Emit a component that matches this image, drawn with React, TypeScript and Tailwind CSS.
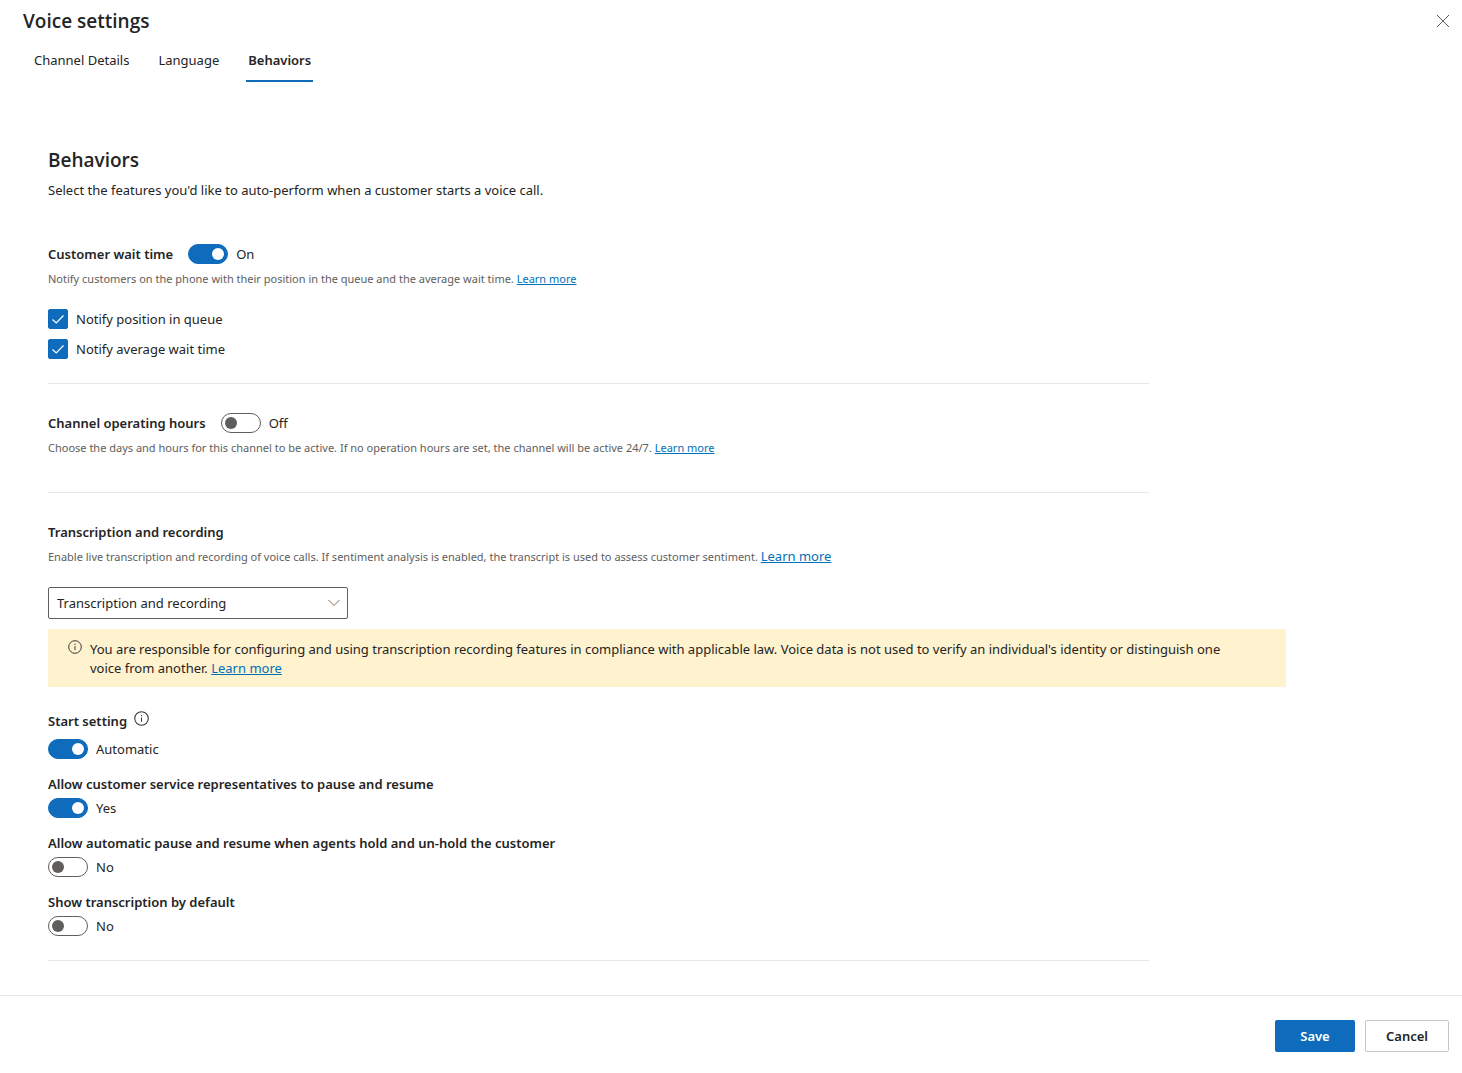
import React, { useState } from 'react';

const TABS = ['Channel Details', 'Language', 'Behaviors'];

interface ToggleProps {
  id: string;
  checked: boolean;
  onChange: (checked: boolean) => void;
  labelledBy: string;
  text: string;
}

const Toggle: React.FC<ToggleProps> = ({ id, checked, onChange, labelledBy, text }) => (
  <div className="flex items-center gap-2">
    <input
      id={id}
      type="checkbox"
      role="switch"
      aria-labelledby={labelledBy}
      checked={checked}
      onChange={(e) => onChange(e.target.checked)}
      className="flex h-5 w-10 shrink-0 cursor-pointer appearance-none items-center rounded-full border border-[#605e5c] bg-white px-[3px] before:size-3 before:rounded-full before:bg-[#605e5c] checked:justify-end checked:border-[#0f6cbd] checked:bg-[#0f6cbd] checked:before:bg-white"
    />
    <span>{text}</span>
  </div>
);

interface CheckboxProps {
  label: string;
  checked: boolean;
  onChange: (checked: boolean) => void;
}

const Checkbox: React.FC<CheckboxProps> = ({ label, checked, onChange }) => (
  <label className="flex w-fit cursor-pointer items-center gap-2">
    <span className="relative size-5">
      <input
        type="checkbox"
        checked={checked}
        onChange={(e) => onChange(e.target.checked)}
        className="block size-5 cursor-pointer appearance-none rounded-xs border border-[#605e5c] checked:border-[#0f6cbd] checked:bg-[#0f6cbd]"
      />
      <svg viewBox="0 0 20 20" fill="none" stroke="white" className="pointer-events-none absolute inset-0 size-5">
        <path d="M4.5 10.5l3.7 3.5 7.3-7.5" strokeWidth="1.2" />
      </svg>
    </span>
    {label}
  </label>
);

const LearnMore: React.FC<{ className?: string }> = ({ className }) => (
  <a href="#" className={`text-[#0070b8] underline underline-offset-1 ${className || ''}`}>
    Learn more
  </a>
);

const InfoIcon: React.FC<{ className: string }> = ({ className }) => (
  <svg viewBox="0 0 16 16" fill="none" stroke="#323130" className={className}>
    <circle cx="8" cy="8" r="7.2" strokeWidth="1.1" />
    <path d="M8 7v4.5" strokeWidth="1.1" />
    <path d="M8 4.4v1.2" strokeWidth="1.2" />
  </svg>
);

const Divider = ({ className }: { className: string }) => (
  <hr className={`max-w-[1101px] border-[#e8e8e8] ${className}`} />
);

export default function App() {
  const [activeTab, setActiveTab] = useState('Behaviors');
  const [waitTime, setWaitTime] = useState(true);
  const [notifyPosition, setNotifyPosition] = useState(true);
  const [notifyAverage, setNotifyAverage] = useState(true);
  const [operatingHours, setOperatingHours] = useState(false);
  const [autoStart, setAutoStart] = useState(true);
  const [allowPause, setAllowPause] = useState(true);
  const [autoPause, setAutoPause] = useState(false);
  const [showTranscript, setShowTranscript] = useState(false);

  return (
    <div className="flex min-h-screen flex-col bg-white font-['Segoe_UI','Noto_Sans',sans-serif] text-[13px] leading-5 text-[#242424]">
      <header className="flex h-[42px] items-center justify-between pr-[11px] pl-[23px]">
        <h1 className="font-['Segoe_UI','Open_Sans',sans-serif] text-[19px] font-semibold">Voice settings</h1>
        <button aria-label="Close" className="flex size-4 items-center justify-center">
          <svg viewBox="0 0 14 14" fill="none" stroke="#605e5c" className="size-[14px]">
            <path d="M1 1l12 12M13 1L1 13" strokeWidth="1" />
          </svg>
        </button>
      </header>

      <nav className="flex gap-[25px] pl-8">
        {TABS.map((tab) => (
          <button
            key={tab}
            onClick={() => setActiveTab(tab)}
            className={`flex h-10 items-start border-b-2 px-0.5 pt-2 ${
              tab === activeTab ? 'border-[#0f6cbd] font-semibold' : 'border-transparent'
            }`}
          >
            {tab}
          </button>
        ))}
      </nav>

      <main className="max-w-[1334px] flex-1 px-12 pt-16 pb-[34px]">
        <h2 className="font-['Segoe_UI','Open_Sans',sans-serif] text-[19px] leading-7 font-semibold">Behaviors</h2>
        <p className="mt-1.5">Select the features you'd like to auto-perform when a customer starts a voice call.</p>

        <section className="mt-11">
          <div className="flex items-center gap-[15px]">
            <label id="wait-label" htmlFor="wait" className="font-semibold">Customer wait time</label>
            <Toggle id="wait" labelledBy="wait-label" checked={waitTime} onChange={setWaitTime} text={waitTime ? 'On' : 'Off'} />
          </div>
          <p className="mt-[5px] text-[11px] leading-5 text-[#605e5c]">
            Notify customers on the phone with their position in the queue and the average wait time. <LearnMore />
          </p>
          <div className="mt-5 flex flex-col gap-2.5">
            <Checkbox label="Notify position in queue" checked={notifyPosition} onChange={setNotifyPosition} />
            <Checkbox label="Notify average wait time" checked={notifyAverage} onChange={setNotifyAverage} />
          </div>
        </section>

        <Divider className="mt-6" />

        <section className="mt-[29px]">
          <div className="flex items-center gap-[15px]">
            <label id="hours-label" htmlFor="hours" className="font-semibold">Channel operating hours</label>
            <Toggle id="hours" labelledBy="hours-label" checked={operatingHours} onChange={setOperatingHours} text={operatingHours ? 'On' : 'Off'} />
          </div>
          <p className="mt-[5px] text-[11px] leading-5 text-[#605e5c]">
            Choose the days and hours for this channel to be active. If no operation hours are set, the channel will be active 24/7. <LearnMore />
          </p>
        </section>

        <Divider className="mt-[34px]" />

        <section className="mt-[29px]">
          <label htmlFor="mode" className="block font-semibold">Transcription and recording</label>
          <p className="mt-[5px] text-[11px] leading-5 text-[#605e5c]">
            Enable live transcription and recording of voice calls. If sentiment analysis is enabled, the transcript is used to assess customer sentiment.{' '}
            <LearnMore className="text-[13px] leading-4" />
          </p>

          <div className="relative mt-5 w-[300px]">
            <select id="mode" className="block h-8 w-full appearance-none rounded-xs border border-[#605e5c] bg-white px-2">
              <option>Transcription and recording</option>
              <option>Transcription</option>
            </select>
            <svg viewBox="0 0 12 8" fill="none" stroke="#8a6a50" className="pointer-events-none absolute top-3 right-2 h-2 w-3">
              <path d="M.5 1L6 6.5 11.5 1" strokeWidth="1" />
            </svg>
          </div>

          <div className="mt-2.5 flex items-start gap-2 bg-[#fff2ce] pt-[11px] pr-9 pb-[9px] pl-5">
            <InfoIcon className="size-[14px] shrink-0" />
            <p className="leading-[19px]">
              You are responsible for configuring and using transcription recording features in compliance with applicable law. Voice data is not used to verify an individual's identity or distinguish one voice from another. <LearnMore />
            </p>
          </div>
        </section>

        <section className="mt-6 flex flex-col gap-[15px]">
          <div>
            <div className="flex items-start gap-[7px]">
              <label id="start-label" htmlFor="start" className="font-semibold">Start setting</label>
              <InfoIcon className="size-[15px]" />
            </div>
            <div className="mt-2">
              <Toggle id="start" labelledBy="start-label" checked={autoStart} onChange={setAutoStart} text={autoStart ? 'Automatic' : 'Manual'} />
            </div>
          </div>
          <div className="flex flex-col gap-1">
            <label id="pause-label" htmlFor="pause" className="font-semibold">Allow customer service representatives to pause and resume</label>
            <Toggle id="pause" labelledBy="pause-label" checked={allowPause} onChange={setAllowPause} text={allowPause ? 'Yes' : 'No'} />
          </div>
          <div className="flex flex-col gap-1">
            <label id="hold-label" htmlFor="hold" className="font-semibold">Allow automatic pause and resume when agents hold and un-hold the customer</label>
            <Toggle id="hold" labelledBy="hold-label" checked={autoPause} onChange={setAutoPause} text={autoPause ? 'Yes' : 'No'} />
          </div>
          <div className="flex flex-col gap-1">
            <label id="show-label" htmlFor="show" className="font-semibold">Show transcription by default</label>
            <Toggle id="show" labelledBy="show-label" checked={showTranscript} onChange={setShowTranscript} text={showTranscript ? 'Yes' : 'No'} />
          </div>
        </section>

        <Divider className="mt-6" />
      </main>

      <footer className="flex justify-end gap-2.5 border-t border-[#e8e8e8] pt-6 pr-[13px] pb-[21px]">
        <button className="h-8 min-w-20 rounded-xs bg-[#0f6cbd] px-5 font-semibold text-white">Save</button>
        <button className="h-8 min-w-[84px] rounded-xs border border-[#c8c6c4] bg-white px-4 font-semibold">Cancel</button>
      </footer>
    </div>
  );
}
